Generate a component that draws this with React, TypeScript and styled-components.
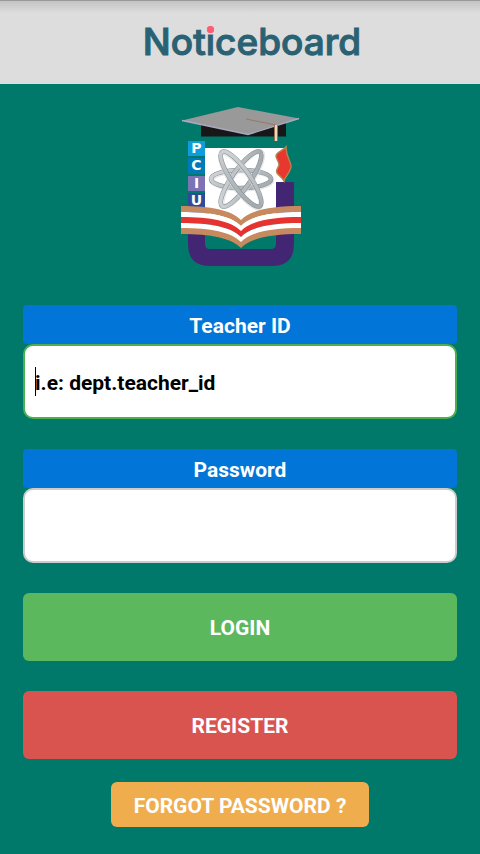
import React from "react";
import styled, { createGlobalStyle } from "styled-components";

const GlobalStyle = createGlobalStyle`
  *, *::before, *::after { box-sizing: border-box; }
  body {
    margin: 0;
    background: #00796b;
    font-family: Roboto, "Noto Sans", sans-serif;
  }
`;

const Header = styled.header`
  display: flex;
  justify-content: center;
  align-items: center;
  height: 84px;
  padding: 0 0 2px 24px;
  border-top: 1px solid #999999;
  background: linear-gradient(#c4c4c4, #dddddd 12px);
`;

const Wordmark = styled.h1`
  position: relative;
  margin: 0;
  color: #2a6274;
  font: 500 37px/44px Inter, sans-serif;
  -webkit-text-stroke: 1px #2a6274;
  stroke-linejoin: round;
  &::after {
    content: "";
    position: absolute;
    top: 6px;
    left: 64px;
    width: 7px;
    height: 7px;
    border-radius: 3px;
    background: #ff5c74;
  }
`;

const Page = styled.form`
  display: flex;
  flex-direction: column;
  align-items: stretch;
  padding: 23px 23px 27px;
`;

const Crest = styled.svg`
  align-self: center;
  width: 120px;
  height: 160px;
  margin: 0 0 38px 2px;
  overflow: visible;
`;

const Field = styled.div`
  display: flex;
  flex-direction: column;
  margin-bottom: 30px;
`;

const FieldLabel = styled.label`
  height: 39px;
  padding-top: 2px;
  border-radius: 4px;
  background: #0275d8;
  color: #ffffff;
  font-size: 21px;
  font-weight: 700;
  line-height: 39px;
  text-align: center;
`;

const InputBox = styled.div<{ $active?: boolean }>`
  position: relative;
  display: flex;
  height: 75px;
  border: 2px solid ${(p) => (p.$active ? "#4caf50" : "#cccccc")};
  border-radius: 10px;
  background: #ffffff;
  &::before {
    content: "";
    display: ${(p) => (p.$active ? "block" : "none")};
    position: absolute;
    left: 10px;
    top: 21px;
    width: 1px;
    height: 29px;
    background: #000000;
  }
`;

const Input = styled.input`
  flex: 1;
  min-width: 0;
  padding: 2px 10px 0;
  border: 0;
  border-radius: 8px;
  outline: 0;
  background: transparent;
  color: #000000;
  caret-color: transparent;
  font: 700 21px Roboto, sans-serif;
  &::placeholder { color: #000000; opacity: 1; }
`;

const Button = styled.button<{ $color: string; $small?: boolean }>`
  align-self: ${(p) => (p.$small ? "center" : "stretch")};
  height: ${(p) => (p.$small ? 45 : 68)}px;
  margin-bottom: ${(p) => (p.$small ? 0 : 30)}px;
  margin-top: ${(p) => (p.$small ? -7 : 0)}px;
  padding: 2px 23px 0;
  border: 0;
  border-radius: 6px;
  background: ${(p) => p.$color};
  color: #ffffff;
  font: 700 21px Roboto, sans-serif;
`;

const blocks = [
  { letter: "P", y: 34, h: 15, fill: "#0d9ddb" },
  { letter: "C", y: 51, h: 16, fill: "#0079b8" },
  { letter: "I", y: 69, h: 15, fill: "#7a74b4" },
  { letter: "U", y: 86, h: 15, fill: "#2f4a9b" },
];

const bands = [
  { y: 99, fill: "#c68a5e" },
  { y: 105, fill: "#ffffff" },
  { y: 110, fill: "#e6332f" },
  { y: 116, fill: "#ffffff" },
  { y: 121, fill: "#c68a5e" },
];

const orbits = [
  { angle: 0, rx: 30 },
  { angle: -55, rx: 33 },
  { angle: 55, rx: 33 },
];

function bandPath(y: number) {
  return `M0 ${y}C30 ${y} 50 ${y + 4} 60 ${y + 14}C70 ${y + 4} 90 ${y} 120 ${y}V${y + 6}C90 ${y + 6} 70 ${y + 10} 60 ${y + 20}C50 ${y + 10} 30 ${y + 6} 0 ${y + 6}Z`;
}

function CollegeCrest() {
  return (
    <Crest viewBox="0 0 120 160" role="img" aria-label="PCIU crest">
      <defs>
        <linearGradient id="steel" x1="27" y1="42" x2="70" y2="102" gradientUnits="userSpaceOnUse">
          <stop offset="0" stopColor="#e4e6e7" />
          <stop offset="0.5" stopColor="#c0c5c8" />
          <stop offset="1" stopColor="#9ba3a8" />
        </linearGradient>
      </defs>
      <path d="M20 15H105V29.5H20Z" fill="#171717" />
      <path d="M1 13.5L57 0L118 11.5L67 27.5Z" fill="#999999" />
      <path d="M1 13.5L67 27.5L118 11.5" fill="none" stroke="#aaa9c3" strokeWidth="1.4" />
      <path d="M65 12L95 18" fill="none" stroke="#a17659" strokeWidth="1" />
      <path d="M95 18V34" stroke="#9a7256" strokeWidth="4" />
      <path d="M95 18V34" stroke="#f3d5bd" strokeWidth="2" />
      <path d="M24 41H103V104L60 125L24 104Z" fill="#ffffff" />
      <path d="M7 101V137Q7 159 29 159H91Q113 159 113 137V75H95V137Q95 142 90 142H29Q24 142 24 137V101Z" fill="#432673" />
      {blocks.map((b) => (
        <g key={b.letter}>
          <rect x="7" y={b.y} width="17" height={b.h} fill={b.fill} />
          <text x="15.5" y={b.y + 12} textAnchor="middle" fill="#ffffff" fontFamily="DejaVu Sans" fontWeight="700" fontSize="14">
            {b.letter}
          </text>
        </g>
      ))}
      {orbits.map((o) => (
        <g key={o.angle} transform={`rotate(${o.angle} 60 72)`} fill="none">
          <ellipse cx="61" cy="73" rx={o.rx} ry="9" stroke="#d5d8da" strokeWidth="5" opacity="0.6" />
          <ellipse cx="60" cy="72" rx={o.rx} ry="9" stroke="#858d92" strokeWidth="4.6" />
          <ellipse cx="60" cy="72" rx={o.rx} ry="9" stroke="url(#steel)" strokeWidth="3.6" />
        </g>
      ))}
      <path
        d="M105 40C103 43 95 45 95 49C95 52 98 54 98 58C97 62 94 63 96 66C98 69 101 70 103 74C104 69 110 65 110 59C110 54 105 51 105 40Z"
        fill="#e8372f"
        stroke="#b9824f"
        strokeWidth="1.4"
      />
      {bands.map((b) => (
        <path key={b.y} d={bandPath(b.y)} fill={b.fill} />
      ))}
    </Crest>
  );
}

export default function App() {
  return (
    <>
      <GlobalStyle />
      <Header>
        <Wordmark>Noticeboard</Wordmark>
      </Header>
      <Page onSubmit={(e) => e.preventDefault()}>
        <CollegeCrest />
        <Field>
          <FieldLabel htmlFor="teacher">Teacher ID</FieldLabel>
          <InputBox $active>
            <Input id="teacher" type="text" placeholder="i.e: dept.teacher_id" />
          </InputBox>
        </Field>
        <Field>
          <FieldLabel htmlFor="password">Password</FieldLabel>
          <InputBox>
            <Input id="password" type="password" />
          </InputBox>
        </Field>
        <Button type="submit" $color="#5cb85c">LOGIN</Button>
        <Button type="button" $color="#d9534f">REGISTER</Button>
        <Button type="button" $color="#f0ad4e" $small>FORGOT PASSWORD ?</Button>
      </Page>
    </>
  );
}
